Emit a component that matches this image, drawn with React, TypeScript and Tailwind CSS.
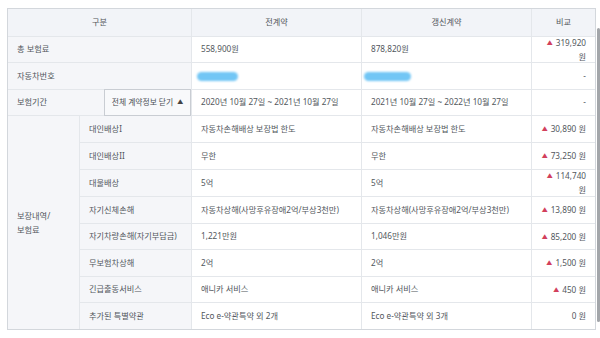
import React from "react";

const font = { fontFamily: '"Noto Sans", "Noto Sans CJK KR", sans-serif' };

type Row = { label: string; prev: string; next: string; diff: string; wrap?: boolean };

const coverage: Row[] = [
  { label: "대인배상I", prev: "자동차손해배상 보장법 한도", next: "자동차손해배상 보장법 한도", diff: "30,890" },
  { label: "대인배상II", prev: "무한", next: "무한", diff: "73,250" },
  { label: "대물배상", prev: "5억", next: "5억", diff: "114,740", wrap: true },
  { label: "자기신체손해", prev: "자동차상해(사망후유장애2억/부상3천만)", next: "자동차상해(사망후유장애2억/부상3천만)", diff: "13,890" },
  { label: "자기차량손해(자기부담금)", prev: "1,221만원", next: "1,046만원", diff: "85,200" },
  { label: "무보험차상해", prev: "2억", next: "2억", diff: "1,500" },
  { label: "긴급출동서비스", prev: "애니카 서비스", next: "애니카 서비스", diff: "450" },
  { label: "추가된 특별약관", prev: "Eco e-약관특약 외 2개", next: "Eco e-약관특약 외 3개", diff: "0" },
];

function Diff({ value, wrap }: { value: string; wrap?: boolean }) {
  if (value === "0") return <span>0 원</span>;
  return (
    <span className="text-right leading-[14px]">
      <span className="text-[6px] text-[#d2405c] mr-[3px] align-[1px]">▲</span>
      {value}
      {wrap ? <br /> : " "}
      원
    </span>
  );
}

function Blob({ w }: { w: number }) {
  return (
    <div
      className="h-[9px] rounded-full bg-[#72c6f5] blur-[1px]"
      style={{ width: w }}
    />
  );
}

export default function App() {
  const label = "bg-[#f5f6f9] flex items-center px-[9px]";
  const cell = "bg-white flex items-center px-[9px]";
  const cmp = "bg-white flex items-center justify-end px-[9px]";

  return (
    <div className="w-[600px] h-[338px] bg-white flex text-[8.2px] text-[#52575d] overflow-hidden" style={font}>
      <div className="ml-[7px] mt-[8px] border border-[#d3d7dc] bg-[#e4e7eb] self-start">
        <div className="grid grid-cols-[71px_111px_169px_169px_63px] grid-rows-[27px_25px_26px_25px_26px_26px_26px_26px_25px_26px_25px_26px] gap-px">
          <div className="col-span-2 bg-[#f2f4f8] flex items-center justify-center">구분</div>
          <div className="bg-[#f2f4f8] flex items-center justify-center">전계약</div>
          <div className="bg-[#f2f4f8] flex items-center justify-center">갱신계약</div>
          <div className="bg-[#f2f4f8] flex items-center justify-center">비교</div>

          <div className={`col-span-2 ${label}`}>총 보험료</div>
          <div className={cell}>558,900원</div>
          <div className={cell}>878,820원</div>
          <div className={cmp}>
            <Diff value="319,920" wrap />
          </div>

          <div className={`col-span-2 ${label}`}>자동차번호</div>
          <div className={`${cell} pl-[5px]`}>
            <Blob w={41} />
          </div>
          <div className={`${cell} pl-[2px]`}>
            <Blob w={47} />
          </div>
          <div className={cmp}>-</div>

          <div className={`col-span-2 ${label} pr-0`}>
            <span>보험기간</span>
            <div className="ml-auto -my-px h-[calc(100%+2px)] w-[87px] border border-[#c9cdd3] bg-[#f8f9fb] flex items-center justify-center gap-[4px] text-[#4a4f55] text-[7.8px]">
              전체 계약정보 닫기
              <span className="text-[6px] text-[#444]">▲</span>
            </div>
          </div>
          <div className={cell}>2020년 10월 27일 ~ 2021년 10월 27일</div>
          <div className={cell}>2021년 10월 27일 ~ 2022년 10월 27일</div>
          <div className={cmp}>-</div>

          <div className={`row-span-8 ${label} leading-[14px]`}>
            보장내역/
            <br />
            보험료
          </div>
          {coverage.map((r) => (
            <React.Fragment key={r.label}>
              <div className={label}>{r.label}</div>
              <div className={cell}>{r.prev}</div>
              <div className={cell}>{r.next}</div>
              <div className={cmp}>
                <Diff value={r.diff} wrap={r.wrap} />
              </div>
            </React.Fragment>
          ))}
        </div>
      </div>
      <div className="ml-[1px] mt-[28px] w-[3px] h-[294px] bg-[#a3a6aa] rounded-sm" />
    </div>
  );
}
